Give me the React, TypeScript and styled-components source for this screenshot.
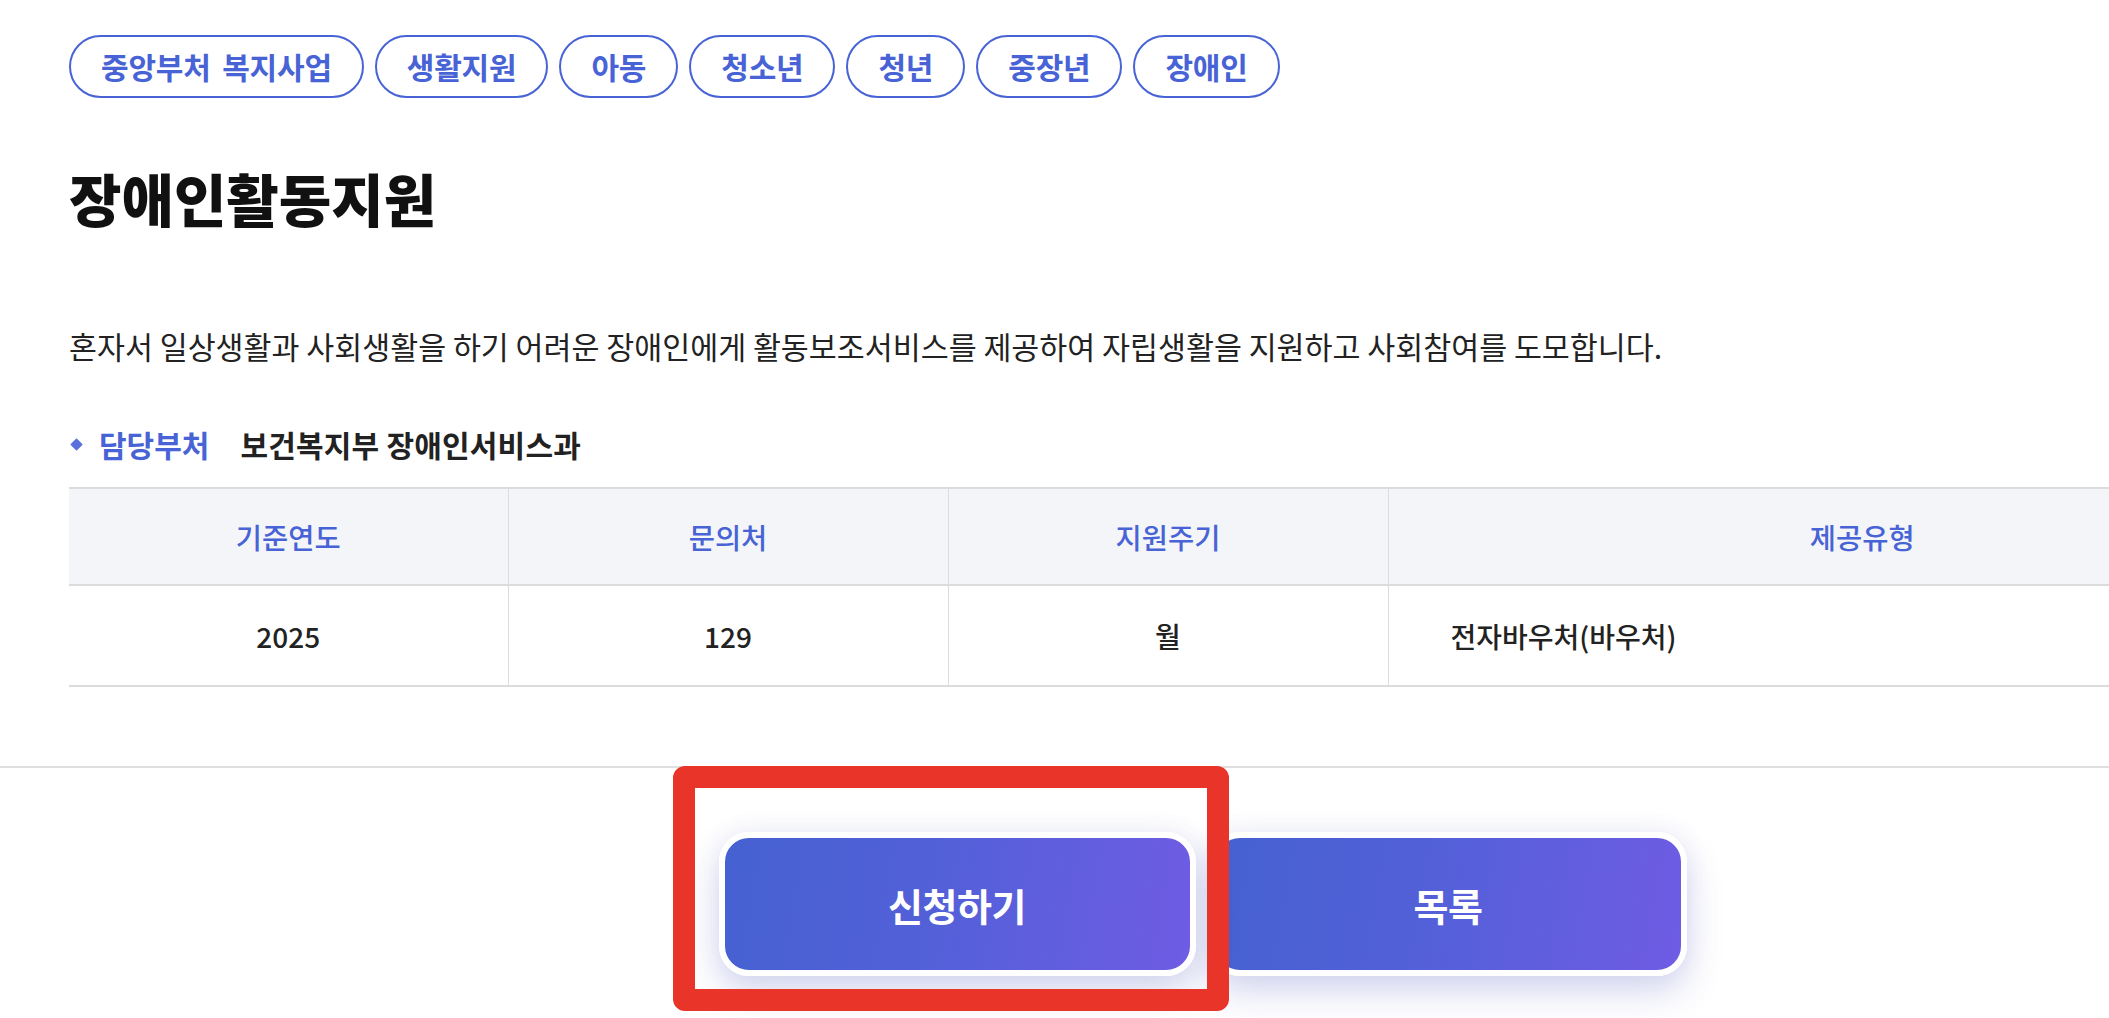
import React from "react";
import styled, { createGlobalStyle } from "styled-components";

const GlobalStyle = createGlobalStyle`
  html, body {
    margin: 0;
    padding: 0;
    background: #ffffff;
    overflow: hidden;
  }
  body {
    font-family: "Noto Sans CJK KR", "Noto Sans", sans-serif;
    color: #222222;
  }
  * { box-sizing: border-box; }
`;

const BLUE = "#4863d5";

const Page = styled.div`
  width: 100%;
  min-height: 100vh;
  overflow: hidden;
`;

const Content = styled.div`
  width: 2336px;
  padding: 35px 0 0 69px;
`;

const TagList = styled.ul`
  display: flex;
  gap: 11px;
  list-style: none;
  margin: 0;
  padding: 0;
`;

const Tag = styled.li`
  height: 63px;
  padding: 0 30px;
  border: 2px solid ${BLUE};
  border-radius: 32px;
  color: ${BLUE};
  font-size: 30px;
  font-weight: 700;
  letter-spacing: -0.2px;
  word-spacing: 5px;
  line-height: 59px;
  white-space: nowrap;
`;

const Title = styled.h1`
  margin: 64px 0 0;
  font-size: 57px;
  font-weight: 900;
  letter-spacing: 0;
  line-height: 70px;
  color: #111111;
`;

const Description = styled.p`
  margin: 94px 0 0;
  font-size: 30.4px;
  font-weight: 400;
  line-height: 40px;
  color: #222222;
  white-space: nowrap;
`;

const DeptRow = styled.div`
  display: flex;
  align-items: center;
  margin-top: 58px;
  height: 40px;
  font-size: 30px;
  font-weight: 700;
  line-height: 40px;
`;

const Bullet = styled.span`
  width: 9px;
  height: 9px;
  margin: 0 18px 0 3px;
  background: #5a70da;
  border-radius: 1px;
  transform: rotate(45deg);
  filter: blur(0.4px);
`;

const DeptLabel = styled.span`
  color: ${BLUE};
  margin-right: 31px;
`;

const DeptValue = styled.span`
  color: #222222;
  letter-spacing: 0.2px;
`;

const InfoTable = styled.table`
  margin-top: 23px;
  width: 2267px;
  border-collapse: collapse;
  table-layout: fixed;
`;

const HeadCell = styled.th`
  height: 97px;
  background: #f4f5f9;
  border-top: 2px solid #dcdcdc;
  border-bottom: 2px solid #dcdcdc;
  border-left: 1px solid #dcdcdc;
  color: ${BLUE};
  font-size: 28.5px;
  font-weight: 500;
  text-align: center;
  padding: 0;
  &:first-child { border-left: none; }
`;

const Cell = styled.td<{ $left?: boolean }>`
  height: 101px;
  border-bottom: 2px solid #dcdcdc;
  border-left: 1px solid #dcdcdc;
  color: #222222;
  font-size: 28px;
  font-weight: 500;
  text-align: ${(p) => (p.$left ? "left" : "center")};
  padding: 0 0 0 ${(p) => (p.$left ? "62px" : "0")};
  &:first-child { border-left: none; }
`;

const Divider = styled.hr`
  margin: 79px 0 0;
  border: none;
  border-top: 2px solid #dfdfdf;
  width: 100%;
`;

const Actions = styled.div`
  width: 2267px;
  margin-left: 69px;
  padding-top: 64px;
  display: flex;
  justify-content: center;
  gap: 14px;
`;

const ButtonSlot = styled.div`
  position: relative;
`;

const ActionButton = styled.button`
  width: 477px;
  height: 144px;
  border: 6px solid #ffffff;
  border-radius: 30px;
  background: linear-gradient(100deg, #4561d1 0%, #5360d8 45%, #6f5ce4 100%);
  color: #ffffff;
  font-family: "Noto Sans CJK KR", "Noto Sans", sans-serif;
  font-size: 38px;
  font-weight: 700;
  letter-spacing: -0.5px;
  box-shadow: 0 16px 36px rgba(70, 78, 180, 0.22), 0 0 24px rgba(90, 90, 190, 0.08);
  cursor: pointer;
`;

const Highlight = styled.div`
  position: absolute;
  left: -46px;
  top: -66px;
  width: 556px;
  height: 245px;
  border: 22px solid #e9342a;
  border-radius: 12px;
  pointer-events: none;
  z-index: 2;
`;

const tags = ["중앙부처 복지사업", "생활지원", "아동", "청소년", "청년", "중장년", "장애인"];

export default function App() {
  return (
    <>
      <GlobalStyle />
      <Page>
        <Content>
          <TagList>
            {tags.map((t) => (
              <Tag key={t}>{t}</Tag>
            ))}
          </TagList>
          <Title>장애인활동지원</Title>
          <Description>
            혼자서 일상생활과 사회생활을 하기 어려운 장애인에게 활동보조서비스를 제공하여 자립생활을 지원하고 사회참여를 도모합니다.
          </Description>
          <DeptRow>
            <Bullet />
            <DeptLabel>담당부처</DeptLabel>
            <DeptValue>보건복지부 장애인서비스과</DeptValue>
          </DeptRow>
          <InfoTable>
            <colgroup>
              <col style={{ width: 439 }} />
              <col style={{ width: 440 }} />
              <col style={{ width: 440 }} />
              <col />
            </colgroup>
            <thead>
              <tr>
                <HeadCell>기준연도</HeadCell>
                <HeadCell>문의처</HeadCell>
                <HeadCell>지원주기</HeadCell>
                <HeadCell>제공유형</HeadCell>
              </tr>
            </thead>
            <tbody>
              <tr>
                <Cell>2025</Cell>
                <Cell>129</Cell>
                <Cell>월</Cell>
                <Cell $left>전자바우처(바우처)</Cell>
              </tr>
            </tbody>
          </InfoTable>
        </Content>
        <Divider />
        <Actions>
          <ButtonSlot>
            <ActionButton>신청하기</ActionButton>
            <Highlight />
          </ButtonSlot>
          <ActionButton>목록</ActionButton>
        </Actions>
      </Page>
    </>
  );
}
